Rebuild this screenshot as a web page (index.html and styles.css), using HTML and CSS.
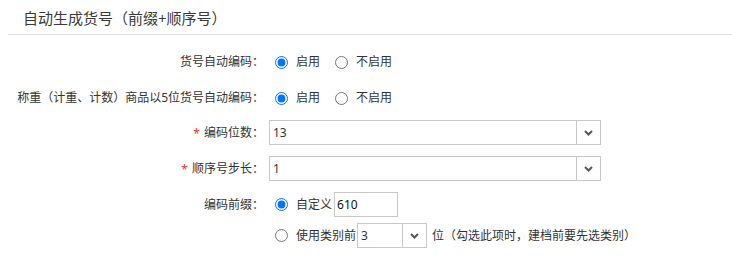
FILE: index.html
```html
<!DOCTYPE html>
<html lang="zh-CN">

<head>
    <meta charset="UTF-8">
    <title>自动生成货号</title>
    <link rel="stylesheet" href="styles.css">
</head>

<body>
    <div class="panel">
        <div class="panel-title">自动生成货号（前缀+顺序号）</div>

        <div class="form">
            <div class="form-row row-radio">
                <div class="form-label">货号自动编码：</div>
                <div class="form-field">
                    <label class="radio"><input type="radio" name="autoCode" checked><span>启用</span></label>
                    <label class="radio"><input type="radio" name="autoCode"><span>不启用</span></label>
                </div>
            </div>

            <div class="form-row row-radio">
                <div class="form-label">称重（计重、计数）商品以5位货号自动编码：</div>
                <div class="form-field">
                    <label class="radio"><input type="radio" name="weighCode" checked><span>启用</span></label>
                    <label class="radio"><input type="radio" name="weighCode"><span>不启用</span></label>
                </div>
            </div>

            <div class="form-row row-select first-select">
                <div class="form-label"><span class="required">*</span>编码位数：</div>
                <div class="form-field">
                    <div class="combo combo-wide">
                        <span class="combo-value">13</span>
                        <span class="combo-arrow">
                            <svg width="9" height="6" viewBox="0 0 9 6"><polyline points="1,1 4.5,4.5 8,1" fill="none" stroke="#555" stroke-width="2"/></svg>
                        </span>
                    </div>
                </div>
            </div>

            <div class="form-row row-select">
                <div class="form-label"><span class="required">*</span>顺序号步长：</div>
                <div class="form-field">
                    <div class="combo combo-wide">
                        <span class="combo-value">1</span>
                        <span class="combo-arrow">
                            <svg width="9" height="6" viewBox="0 0 9 6"><polyline points="1,1 4.5,4.5 8,1" fill="none" stroke="#555" stroke-width="2"/></svg>
                        </span>
                    </div>
                </div>
            </div>

            <div class="form-row row-prefix">
                <div class="form-label">编码前缀：</div>
                <div class="form-field options">
                    <div class="option">
                        <label class="radio"><input type="radio" name="prefix" checked><span>自定义</span></label>
                        <input class="text-input" type="text" value="610">
                    </div>
                    <div class="option">
                        <label class="radio"><input type="radio" name="prefix"><span>使用类别前</span></label>
                        <div class="combo combo-small">
                            <span class="combo-value">3</span>
                            <span class="combo-arrow">
                                <svg width="9" height="6" viewBox="0 0 9 6"><polyline points="1,1 4.5,4.5 8,1" fill="none" stroke="#555" stroke-width="2"/></svg>
                            </span>
                        </div>
                        <span class="hint">位（勾选此项时，建档前要先选类别）</span>
                    </div>
                </div>
            </div>
        </div>
    </div>
</body>

</html>
```

FILE: styles.css
```css
:root {
    --text: #333333;
    --border: #c9c9c9;
    --line: #dedede;
    --required: #e4393c;
}

body {
    margin: 0;
    background: #ffffff;
    color: var(--text);
    font-family: "Noto Sans", "Noto Sans CJK SC", sans-serif;
    font-size: 12px;
    line-height: 16px;
}

.panel {
    margin-left: 8px;
}

.panel-title {
    padding: 8px 0 6px 15px;
    font-size: 15px;
    line-height: 20px;
    color: #3a3a3a;
    border-bottom: 1px solid var(--line);
}

.form {
    padding-top: 9px;
}

.form-row {
    display: flex;
    align-items: center;
}

.row-radio {
    height: 36px;
}

.row-select {
    height: 25px;
    margin-top: 11px;
}

.row-select.first-select {
    margin-top: 4px;
}

.row-prefix {
    align-items: flex-start;
    margin-top: 11px;
}

.form-label {
    width: 256px;
    flex-shrink: 0;
    text-align: right;
    white-space: nowrap;
}

.row-prefix .form-label {
    line-height: 25px;
}

.required {
    color: var(--required);
    margin-right: 4px;
    position: relative;
    top: 1px;
}

.form-field {
    display: flex;
    align-items: center;
    padding-left: 5px;
}

.radio {
    display: inline-flex;
    align-items: center;
    cursor: pointer;
}

.radio input {
    width: 13px;
    height: 13px;
    margin: 0 8px 0 6px;
}

.radio + .radio input {
    margin-left: 15px;
}

.combo {
    display: flex;
    height: 25px;
    box-sizing: border-box;
    border: 1px solid var(--border);
    background: #ffffff;
}

.combo-wide {
    width: 332px;
}

.combo-small {
    width: 70px;
    margin-left: 1px;
}

.combo-value {
    flex: 1;
    padding-left: 3px;
    line-height: 23px;
}

.combo-arrow {
    width: 23px;
    border-left: 1px solid var(--border);
    display: flex;
    align-items: center;
    justify-content: center;
}

.options {
    flex-direction: column;
    align-items: flex-start;
}

.option {
    display: flex;
    align-items: center;
    height: 25px;
}

.option + .option {
    margin-top: 6px;
}

.text-input {
    width: 64px;
    height: 25px;
    box-sizing: border-box;
    margin: 0 0 0 2px;
    padding: 0 2px;
    border: 1px solid var(--border);
    font-family: inherit;
    font-size: 12px;
    color: #111111;
    outline: none;
}

.hint {
    margin-left: 5px;
}
```
